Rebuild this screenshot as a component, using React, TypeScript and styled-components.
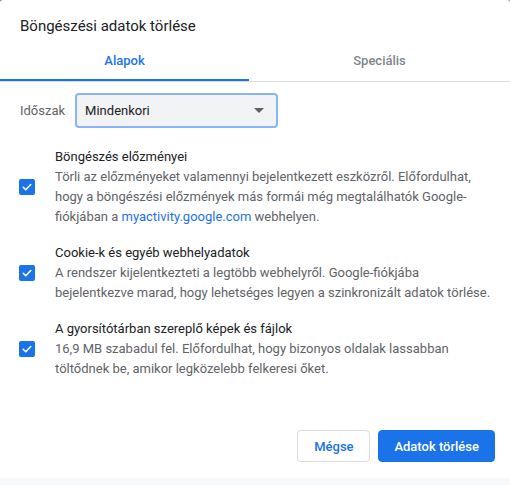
import styled, { createGlobalStyle } from 'styled-components'

const GlobalStyle = createGlobalStyle`
  html, body {
    margin: 0;
    padding: 0;
    background: #8a8a8a;
  }
  body {
    font-family: Roboto, 'Noto Sans', 'Liberation Sans', sans-serif;
    -webkit-font-smoothing: antialiased;
  }
`

const Link = styled.a`
  color: #1a73e8;
  text-decoration: none;
`

const items = [
  {
    title: 'Böngészés előzményei',
    desc: (
      <>
        Törli az előzményeket valamennyi bejelentkezett eszközről. Előfordulhat, hogy a böngészési
        előzmények más formái még megtalálhatók Google-fiókjában a{' '}
        <Link href='#'>myactivity.google.com</Link> webhelyen.
      </>
    ),
  },
  {
    title: 'Cookie-k és egyéb webhelyadatok',
    desc: 'A rendszer kijelentkezteti a legtöbb webhelyről. Google-fiókjába bejelentkezve marad, hogy lehetséges legyen a szinkronizált adatok törlése.',
  },
  {
    title: 'A gyorsítótárban szereplő képek és fájlok',
    desc: '16,9 MB szabadul fel. Előfordulhat, hogy bizonyos oldalak lassabban töltődnek be, amikor legközelebb felkeresi őket.',
  },
]

const CheckIcon = () => (
  <svg width='12' height='12' viewBox='0 0 24 24'>
    <path d='M4.5 12.5l5 5L19.5 7' fill='none' stroke='#fff' strokeWidth='3.2' strokeLinecap='round' strokeLinejoin='round' />
  </svg>
)

const App = () => {
  return (
    <>
      <GlobalStyle />
      <Dialog>
        <Title>Böngészési adatok törlése</Title>
        <TabBar>
          <Tab $active>Alapok</Tab>
          <Tab>Speciális</Tab>
        </TabBar>
        <Body>
          <TimeRow>
            <TimeLabel>Időszak</TimeLabel>
            <Select>
              <span>Mindenkori</span>
              <Arrow />
            </Select>
          </TimeRow>
          <ItemList>
            {items.map((item) => (
              <Item key={item.title}>
                <CheckBox>
                  <CheckIcon />
                </CheckBox>
                <ItemText>
                  <ItemTitle>{item.title}</ItemTitle>
                  <ItemDesc>{item.desc}</ItemDesc>
                </ItemText>
              </Item>
            ))}
          </ItemList>
        </Body>
        <Footer>
          <Button>Mégse</Button>
          <Button $primary>Adatok törlése</Button>
        </Footer>
        <BottomStrip />
      </Dialog>
    </>
  )
}

const Dialog = styled.div`
  width: 510px;
  height: 485px;
  background: #fff;
  border-radius: 3px 3px 0 0;
  display: flex;
  flex-direction: column;
  overflow: hidden;
`

const Title = styled.div`
  padding: 16px 20px 0;
  font-size: 15px;
  line-height: 20px;
  color: #202124;
`

const TabBar = styled.div`
  margin-top: 4px;
  display: flex;
  border-bottom: 1px solid #dadce0;
`

const Tab = styled.div<{ $active?: boolean }>`
  flex: ${(p) => (p.$active ? '0 0 249px' : '1')};
  height: 41px;
  display: flex;
  align-items: center;
  justify-content: center;
  font-size: 13px;
  font-weight: 500;
  color: ${(p) => (p.$active ? '#1a73e8' : '#80868b')};
  box-shadow: ${(p) => (p.$active ? 'inset 0 -2px 0 #1a73e8' : 'none')};
`

const Body = styled.div`
  padding: 11px 14px 0 19px;
  display: flex;
  flex-direction: column;
  gap: 19px;
`

const TimeRow = styled.div`
  display: flex;
  align-items: center;
  gap: 10px;
  padding-left: 1px;
`

const TimeLabel = styled.span`
  font-size: 13px;
  color: #5f6368;
`

const Select = styled.div`
  box-sizing: border-box;
  width: 203px;
  height: 35px;
  padding: 0 10px 0 8px;
  border: 2px solid #8ab4f8;
  border-radius: 4px;
  background: #f1f3f4;
  display: flex;
  align-items: center;
  justify-content: space-between;
  font-size: 13px;
  color: #202124;
`

const Arrow = styled.span`
  width: 0;
  height: 0;
  border-left: 5px solid transparent;
  border-right: 5px solid transparent;
  border-top: 5px solid #5f6368;
  margin-right: 2px;
`

const ItemList = styled.div`
  display: flex;
  flex-direction: column;
  gap: 16px;
`

const Item = styled.div`
  display: flex;
  align-items: center;
  gap: 20px;
`

const CheckBox = styled.span`
  flex: none;
  width: 16px;
  height: 16px;
  border-radius: 2px;
  background: #1a73e8;
  display: flex;
  align-items: center;
  justify-content: center;
`

const ItemText = styled.div`
  font-size: 13px;
  line-height: 20px;
`

const ItemTitle = styled.div`
  color: #202124;
`

const ItemDesc = styled.div`
  color: #5f6368;
`

const Footer = styled.div`
  margin-top: auto;
  padding: 0 15px 16px;
  display: flex;
  justify-content: flex-end;
  gap: 8px;
`

const Button = styled.button<{ $primary?: boolean }>`
  box-sizing: border-box;
  height: 32px;
  padding: 0 15px;
  min-width: 73px;
  border-radius: 4px;
  font-family: inherit;
  font-size: 13px;
  font-weight: 500;
  border: 1px solid ${(p) => (p.$primary ? '#1a73e8' : '#dadce0')};
  background: ${(p) => (p.$primary ? '#1a73e8' : '#fff')};
  color: ${(p) => (p.$primary ? '#fff' : '#1a73e8')};
`

const BottomStrip = styled.div`
  height: 7px;
  background: #f8f9fa;
`

export default App
